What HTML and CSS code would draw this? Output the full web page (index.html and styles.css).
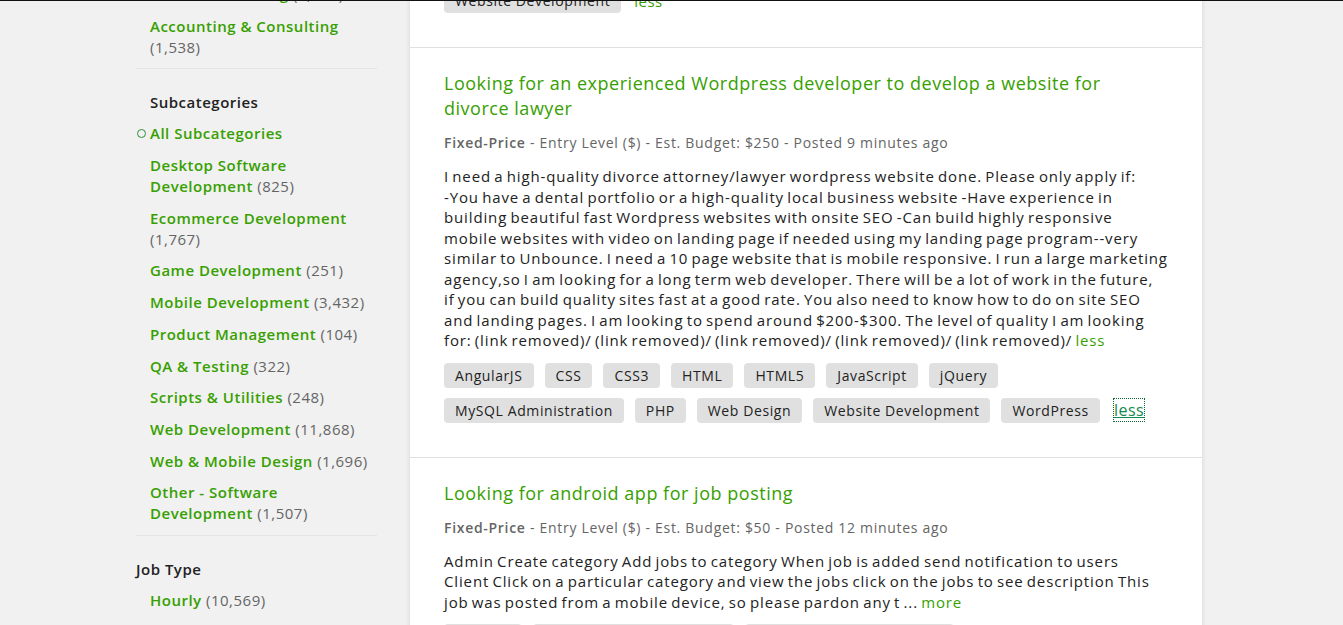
FILE: index.html
```html
<!DOCTYPE html>
<html lang="en">
<head>
<meta charset="utf-8">
<title>Jobs - Web, Mobile &amp; Software Dev</title>
<link rel="stylesheet" href="styles.css">
</head>
<body>
<div class="topline"></div>
<div class="page">
  <aside class="sidebar">
    <section class="facet facet-cats">
      <ul class="facet-list">
        <li><a href="#">Sales &amp; Marketing</a> <span class="count">(4,566)</span></li>
        <li><a href="#">Accounting &amp; Consulting</a> <span class="count">(1,538)</span></li>
      </ul>
    </section>
    <section class="facet">
      <h3 class="facet-title indented">Subcategories</h3>
      <ul class="facet-list">
        <li class="selected"><span class="radio"></span><a href="#">All Subcategories</a></li>
        <li><a href="#">Desktop Software Development</a> <span class="count">(825)</span></li>
        <li><a href="#">Ecommerce Development</a> <span class="count">(1,767)</span></li>
        <li><a href="#">Game Development</a> <span class="count">(251)</span></li>
        <li><a href="#">Mobile Development</a> <span class="count">(3,432)</span></li>
        <li><a href="#">Product Management</a> <span class="count">(104)</span></li>
        <li><a href="#">QA &amp; Testing</a> <span class="count">(322)</span></li>
        <li><a href="#">Scripts &amp; Utilities</a> <span class="count">(248)</span></li>
        <li><a href="#">Web Development</a> <span class="count">(11,868)</span></li>
        <li><a href="#">Web &amp; Mobile Design</a> <span class="count">(1,696)</span></li>
        <li><a href="#">Other - Software Development</a> <span class="count">(1,507)</span></li>
      </ul>
    </section>
    <section class="facet facet-last">
      <h3 class="facet-title">Job Type</h3>
      <ul class="facet-list">
        <li><a href="#">Hourly</a> <span class="count">(10,569)</span></li>
        <li><a href="#">Fixed Price</a> <span class="count">(9,210)</span></li>
      </ul>
    </section>
  </aside>

  <main class="results">
    <article class="job job-prev">
      <div class="tags">
        <span class="tag">Website Development</span>
        <a class="toggle" href="#">less</a>
      </div>
    </article>

    <article class="job">
      <h2 class="job-title"><a href="#">Looking for an experienced Wordpress developer to develop a website for divorce lawyer</a></h2>
      <p class="job-meta"><strong>Fixed-Price</strong> - Entry Level ($) - Est. Budget: $250 - Posted 9 minutes ago</p>
      <p class="job-desc">I need a high-quality divorce attorney/lawyer wordpress website done. Please only apply if: <span class="nw">-You</span> have a dental portfolio or a high-quality local business website <span class="nw">-Have</span> experience in building beautiful fast Wordpress websites with onsite SEO <span class="nw">-Can</span> build highly responsive <span class="nw">mobile websites</span> with video on landing page if needed using my landing page program--very similar to Unbounce. I need a 10 page website that is mobile responsive. I run a large marketing agency,so I am looking for a long term web developer. There will be a lot of work in the future, <span class="nw">if you</span> can build quality sites fast at a good rate. You also need to know how to do on site SEO <span class="nw">and landing</span> pages. I am looking to spend around $200-$300. The level of quality I am looking <span class="nw">for: (link</span> removed)/ (link removed)/ (link removed)/ (link removed)/ (link removed)/ <a class="more" href="#">less</a></p>
      <div class="tags">
        <span class="tag">AngularJS</span>
        <span class="tag">CSS</span>
        <span class="tag">CSS3</span>
        <span class="tag">HTML</span>
        <span class="tag">HTML5</span>
        <span class="tag">JavaScript</span>
        <span class="tag">jQuery</span>
        <span class="tag">MySQL Administration</span>
        <span class="tag">PHP</span>
        <span class="tag">Web Design</span>
        <span class="tag">Website Development</span>
        <span class="tag">WordPress</span>
        <a class="toggle focused" href="#">less</a>
      </div>
    </article>

    <article class="job">
      <h2 class="job-title"><a href="#">Looking for android app for job posting</a></h2>
      <p class="job-meta"><strong>Fixed-Price</strong> - Entry Level ($) - Est. Budget: $50 - Posted 12 minutes ago</p>
      <p class="job-desc">Admin Create category Add jobs to category When job is added send notification to users <span class="nw">Client Click</span> on a particular category and view the jobs click on the jobs to see description This <span class="nw">job was</span> posted from a mobile device, so please pardon any t ... <a class="more" href="#">more</a></p>
      <div class="tags">
        <span class="tag">Android</span>
        <span class="tag">Mobile App Development</span>
        <span class="tag">Android App Development</span>
      </div>
    </article>
  </main>
</div>
</body>
</html>
```
FILE: styles.css
```css
* { box-sizing: border-box; }

html, body {
  margin: 0;
  padding: 0;
}

body {
  background: #f1f1f1;
  font-family: "Open Sans", "Liberation Sans", sans-serif;
  color: #222;
  overflow: hidden;
}

.topline {
  height: 1px;
  background: #111;
  position: relative;
  z-index: 5;
}

a { text-decoration: none; color: #37a000; }

.nw { white-space: nowrap; }

.page {
  display: flex;
  align-items: flex-start;
  padding-left: 136px;
  gap: 33px;
}

/* Sidebar */
.sidebar {
  width: 241px;
  flex: none;
  margin-top: -17px;
  font-size: 15px;
  line-height: 21px;
  letter-spacing: 0.5px;
}

.facet {
  border-bottom: 1px solid #e4e4e4;
  padding-top: 23px;
}
.facet-cats { padding-top: 0; }
.facet-last { border-bottom: none; }

.facet-title {
  margin: 0 0 10px;
  font-size: 15px;
  line-height: 21px;
  font-weight: 600;
  color: #222;
}
.facet-title.indented { padding-left: 14px; }

.facet-list {
  list-style: none;
  margin: 0;
  padding: 0;
}
.facet-list li {
  position: relative;
  padding-left: 14px;
  margin-bottom: 10.7px;
}
.facet-list a {
  font-weight: 600;
  color: #37a000;
}
.count { color: #656565; }

.radio {
  position: absolute;
  left: 1px;
  top: 6px;
  width: 9px;
  height: 9px;
  border: 1.5px solid #2f8f3a;
  border-radius: 50%;
}

/* Results card */
.results {
  width: 792px;
  flex: none;
  margin-top: -36px;
  background: #fff;
  box-shadow: 0 0 5px rgba(0,0,0,0.12);
}

.job {
  padding: 23px 34px 34px;
  border-bottom: 1px solid #e0e0e0;
}

.job-title {
  margin: 0 0 12px;
  font-size: 18px;
  line-height: 25px;
  font-weight: 500;
  letter-spacing: 0.52px;
}

.job-meta {
  margin: 0 0 13px;
  font-size: 14px;
  line-height: 20px;
  color: #656565;
  letter-spacing: 0.7px;
}
.job-meta strong { font-weight: 600; }

.job-desc {
  margin: 0 0 12px;
  font-size: 15px;
  line-height: 20.5px;
  color: #222;
  letter-spacing: 0.86px;
  word-spacing: -1.5px;
}
.more { color: #37a000; font-weight: 500; }

.tags {
  display: flex;
  flex-wrap: wrap;
  align-items: center;
  gap: 10px 11px;
}
.tag {
  display: inline-block;
  height: 25px;
  line-height: 25px;
  padding: 0 11px;
  background: #e0e0e0;
  border-radius: 4px;
  font-size: 14px;
  color: #222;
  letter-spacing: 0.6px;
}
.toggle {
  margin-left: 2px;
  font-size: 15px;
  font-weight: 500;
  color: #37a000;
  letter-spacing: 0.5px;
}
.toggle.focused {
  color: #138a4e;
  text-decoration: underline;
  outline: 1px dotted #0b6b30;
  font-weight: 400;
  font-size: 16px;
  margin-left: 3px;
}
```
